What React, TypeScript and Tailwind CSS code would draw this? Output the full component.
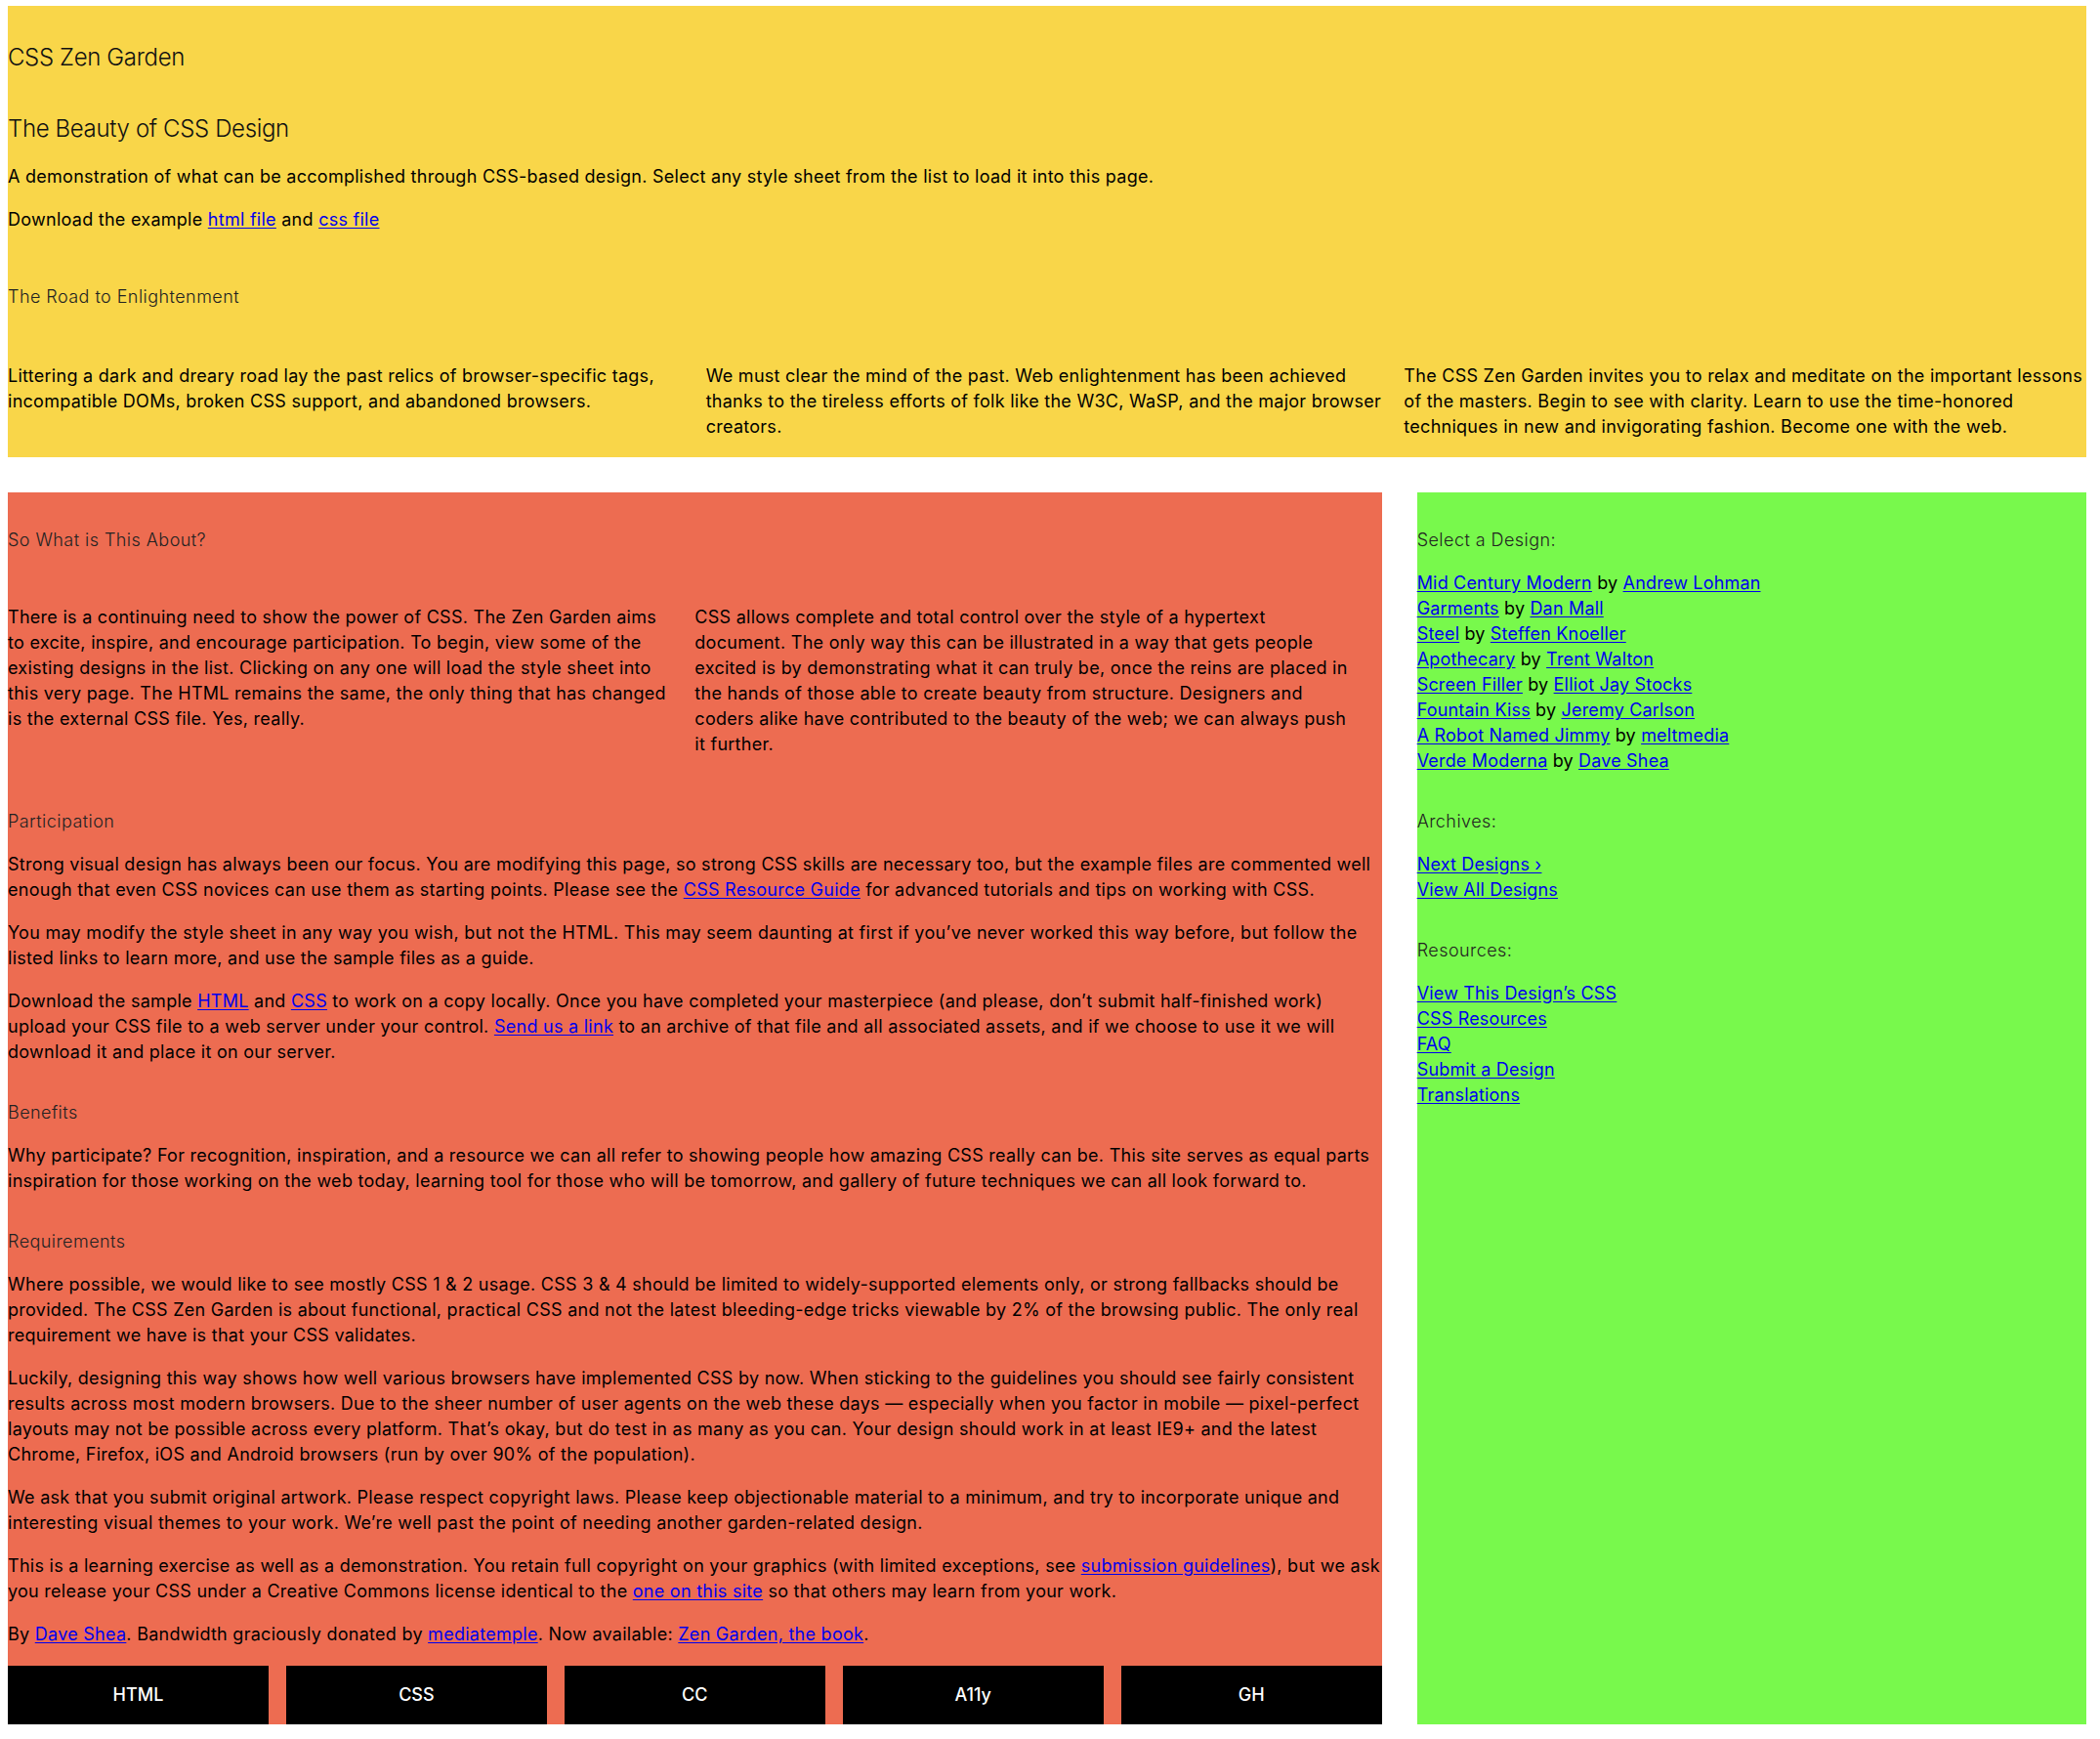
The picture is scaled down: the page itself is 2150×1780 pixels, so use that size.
import React from 'react';

const A: React.FC<{ children: React.ReactNode }> = ({ children }) => (
  <a href="#" className="text-[#0000ee] underline underline-offset-2">
    {children}
  </a>
);

const designs = [
  ['Mid Century Modern', 'Andrew Lohman'],
  ['Garments', 'Dan Mall'],
  ['Steel', 'Steffen Knoeller'],
  ['Apothecary', 'Trent Walton'],
  ['Screen Filler', 'Elliot Jay Stocks'],
  ['Fountain Kiss', 'Jeremy Carlson'],
  ['A Robot Named Jimmy', 'meltmedia'],
  ['Verde Moderna', 'Dave Shea'],
];

const resources = ['View This Design’s CSS', 'CSS Resources', 'FAQ', 'Submit a Design', 'Translations'];

export default function App() {
  return (
    <div className="min-h-[1780px] bg-white pl-2 pr-[14px] pt-[6px] font-['Inter','Noto_Sans',sans-serif] text-[18px] leading-[26px] tracking-[0.015em] text-black">
      {/* Intro */}
      <header className="bg-[#f9d649] pb-[18px]">
        <h1 className="pt-[37px] text-[24px] font-light leading-[32px] tracking-[-0.015em] text-[#111]">CSS Zen Garden</h1>
        <h2 className="mt-[41px] text-[24px] font-light leading-[32px] tracking-[-0.015em] text-[#111]">The Beauty of CSS Design</h2>
        <p className="mt-[20px]">
          A demonstration of what can be accomplished through CSS-based design. Select any style sheet from the list to load it into this page.
        </p>
        <p className="mt-[18px]">
          Download the example <A>html file</A> and <A>css file</A>
        </p>
        <h3 className="mt-[53px] font-light tracking-[0.025em] text-[#222]">The Road to Enlightenment</h3>
        <div className="mt-[55px] grid grid-cols-3 gap-x-4">
          <p>
            Littering a dark and dreary road lay the past relics of browser-specific tags, incompatible DOMs, broken CSS support, and abandoned browsers.
          </p>
          <p>
            We must clear the mind of the past. Web enlightenment has been achieved thanks to the tireless efforts of folk like the W3C, WaSP, and the major browser creators.
          </p>
          <p>
            The CSS Zen Garden invites you to relax and meditate on the important lessons of the masters. Begin to see with clarity. Learn to use the time-honored techniques in new and invigorating fashion. Become one with the web.
          </p>
        </div>
      </header>

      <div className="mt-9 grid grid-cols-3 gap-x-9">
        {/* Main content */}
        <main className="col-span-2 bg-[#ed6c51] pt-[36px]">
          <h3 className="font-light tracking-[0.025em] text-[#222]">So What is This About?</h3>
          <div className="mt-[53px] grid grid-cols-2">
            <p className="pr-[22px]">
              There is a continuing need to show the power of CSS. The Zen Garden aims to excite, inspire, and encourage participation. To begin, view some of the existing designs in the list. Clicking on any one will load the style sheet into this very page. The HTML remains the same, the only thing that has changed is the external CSS file. Yes, really.
            </p>
            <p className="pr-[22px]">
              CSS allows complete and total control over the style of a hypertext document. The only way this can be illustrated in a way that gets people excited is by demonstrating what it can truly be, once the reins are placed in the hands of those able to create beauty from structure. Designers and coders alike have contributed to the beauty of the web; we can always push it further.
            </p>
          </div>

          <h3 className="mt-[53px] font-light tracking-[0.025em] text-[#222]">Participation</h3>
          <p className="mt-[18px]">
            Strong visual design has always been our focus. You are modifying this page, so strong CSS skills are necessary too, but the example files are commented well enough that even CSS novices can use them as starting points. Please see the <A>CSS Resource Guide</A> for advanced tutorials and tips on working with CSS.
          </p>
          <p className="mt-[18px]">
            You may modify the style sheet in any way you wish, but not the HTML. This may seem daunting at first if you’ve never worked this way before, but follow the listed links to learn more, and use the sample files as a guide.
          </p>
          <p className="mt-[18px]">
            Download the sample <A>HTML</A> and <A>CSS</A> to work on a copy locally. Once you have completed your masterpiece (and please, don’t submit half-finished work) upload your CSS file to a web server under your control. <A>Send us a link</A> to an archive of that file and all associated assets, and if we choose to use it we will download it and place it on our server.
          </p>

          <h3 className="mt-[36px] font-light tracking-[0.025em] text-[#222]">Benefits</h3>
          <p className="mt-[18px]">
            Why participate? For recognition, inspiration, and a resource we can all refer to showing people how amazing CSS really can be. This site serves as equal parts inspiration for those working on the web today, learning tool for those who will be tomorrow, and gallery of future techniques we can all look forward to.
          </p>

          <h3 className="mt-[36px] font-light tracking-[0.025em] text-[#222]">Requirements</h3>
          <p className="mt-[18px]">
            Where possible, we would like to see mostly CSS 1 &amp; 2 usage. CSS 3 &amp; 4 should be limited to widely-supported elements only, or strong fallbacks should be provided. The CSS Zen Garden is about functional, practical CSS and not the latest bleeding-edge tricks viewable by 2% of the browsing public. The only real requirement we have is that your CSS validates.
          </p>
          <p className="mt-[18px]">
            Luckily, designing this way shows how well various browsers have implemented CSS by now. When sticking to the guidelines you should see fairly consistent results across most modern browsers. Due to the sheer number of user agents on the web these days — especially when you factor in mobile — pixel-perfect layouts may not be possible across every platform. That’s okay, but do test in as many as you can. Your design should work in at least IE9+ and the latest Chrome, Firefox, iOS and Android browsers (run by over 90% of the population).
          </p>
          <p className="mt-[18px]">
            We ask that you submit original artwork. Please respect copyright laws. Please keep objectionable material to a minimum, and try to incorporate unique and interesting visual themes to your work. We’re well past the point of needing another garden-related design.
          </p>
          <p className="mt-[18px]">
            This is a learning exercise as well as a demonstration. You retain full copyright on your graphics (with limited exceptions, see <A>submission guidelines</A>), but we ask you release your CSS under a Creative Commons license identical to the <A>one on this site</A> so that others may learn from your work.
          </p>
          <p className="mt-[18px]">
            By <A>Dave Shea</A>. Bandwidth graciously donated by <A>mediatemple</A>. Now available: <A>Zen Garden, the book</A>.
          </p>

          <div className="mt-[19px] grid grid-cols-5 gap-x-[18px]">
            {['HTML', 'CSS', 'CC', 'A11y', 'GH'].map((label) => (
              <a
                key={label}
                href="#"
                className="flex h-[60px] items-center justify-center bg-black text-[18px] font-medium tracking-normal text-white"
              >
                {label}
              </a>
            ))}
          </div>
        </main>

        {/* Sidebar */}
        <aside className="bg-[#78f94c] pt-[36px] tracking-[0.01em]">
          <h3 className="font-light tracking-[0.025em] text-[#222]">Select a Design:</h3>
          <ul className="mt-[18px]">
            {designs.map(([name, author]) => (
              <li key={name}>
                <A>{name}</A> by <A>{author}</A>
              </li>
            ))}
          </ul>

          <h3 className="mt-[36px] font-light tracking-[0.025em] text-[#222]">Archives:</h3>
          <ul className="mt-[18px]">
            <li>
              <A>Next Designs ›</A>
            </li>
            <li>
              <A>View All Designs</A>
            </li>
          </ul>

          <h3 className="mt-[36px] font-light tracking-[0.025em] text-[#222]">Resources:</h3>
          <ul className="mt-[18px]">
            {resources.map((r) => (
              <li key={r}>
                <A>{r}</A>
              </li>
            ))}
          </ul>
        </aside>
      </div>
    </div>
  );
}
